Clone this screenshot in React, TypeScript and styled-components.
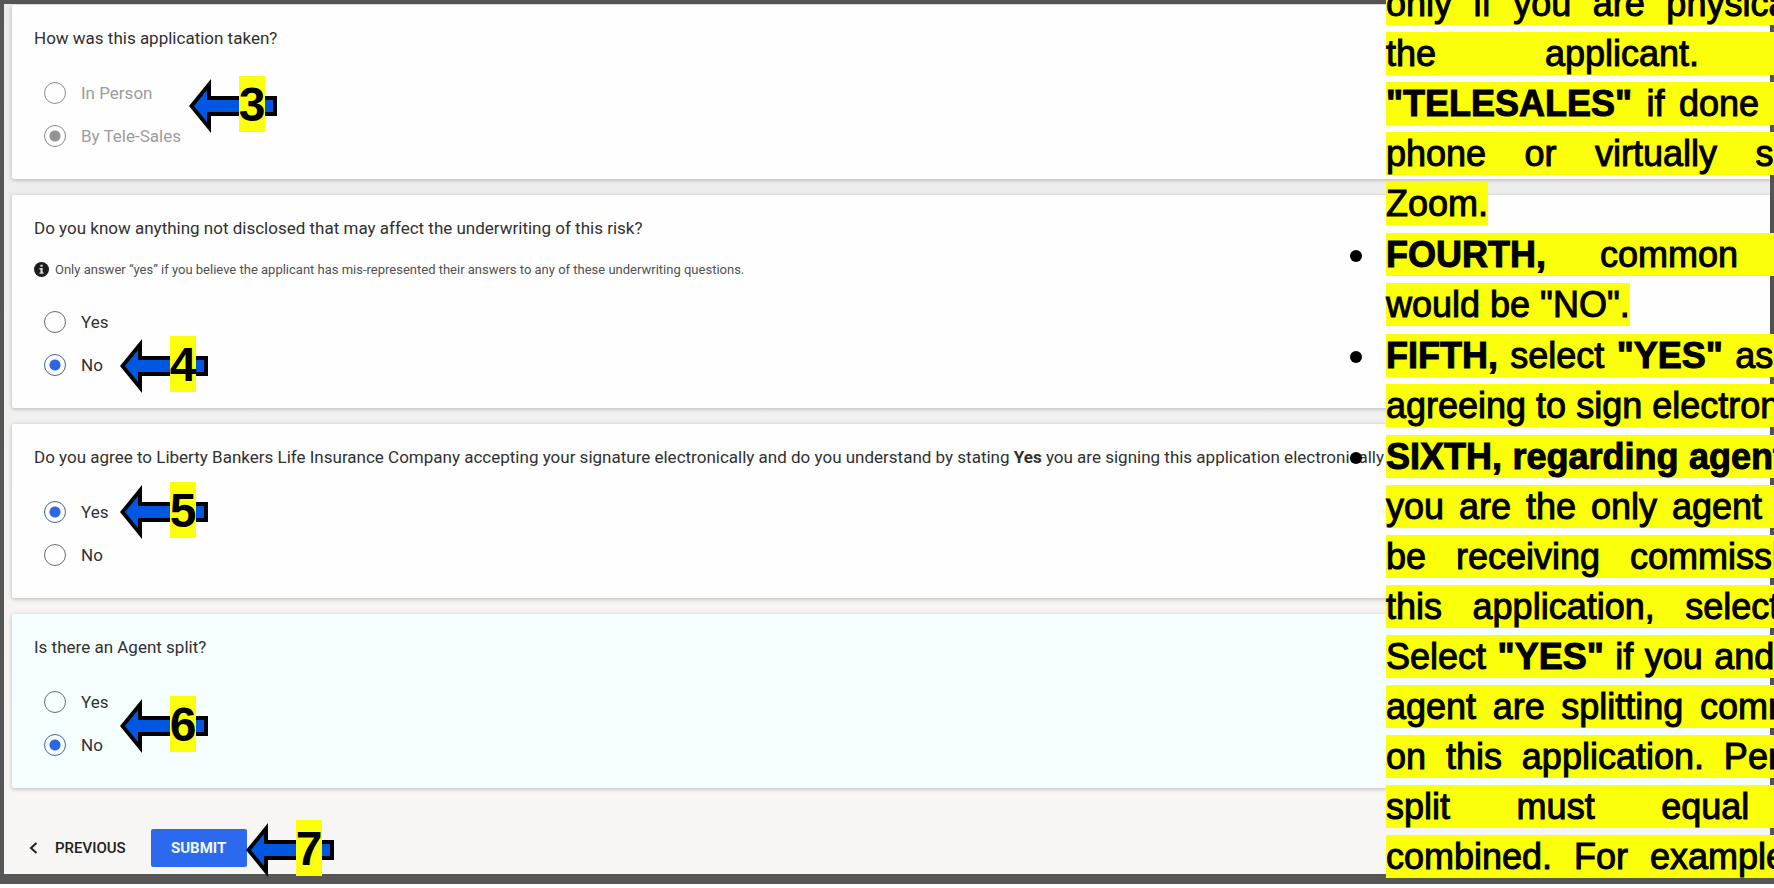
import React, { useState } from "react";
import styled, { createGlobalStyle } from "styled-components";

const GlobalStyle = createGlobalStyle`
  *, *::before, *::after { box-sizing: border-box; }
  body { margin: 0; background: #ffffff; overflow-x: hidden; }
`;

const Page = styled.div`
  position: relative;
  overflow: hidden;
  font-family: Roboto, "Liberation Sans", sans-serif;
`;

const Frame = styled.main`
  border: solid #565656;
  border-width: 4px 4px 10px;
  padding: 1px 0 7px 8px;
  background: linear-gradient(#ebebeb, #f1f1f0 50%, #f8f6f5 80%, #f8f6f5);
  margin-bottom: 4px;
`;

const Form = styled.form`
  display: flex;
  flex-direction: column;
  gap: 16px;
`;

const Card = styled.section<{ $tinted?: boolean }>`
  position: relative;
  padding: 0 22px 32px;
  border-radius: 2px 0 0 2px;
  background: ${(p) => (p.$tinted ? "#f5ffff" : "#fefefe")};
  box-shadow: 0 1px 4px rgba(0, 0, 0, 0.25);
`;

const Fields = styled.fieldset`
  min-width: 0;
  margin: 0;
  border: 0;
  padding: 0;
`;

const Question = styled.legend`
  padding: 21px 0 0;
  font-size: 17px;
  line-height: 24px;
  white-space: nowrap;
  color: #303030;
`;

const Note = styled.p`
  display: flex;
  align-items: center;
  gap: 6px;
  height: 19px;
  margin: 20px 0 0;
  font-size: 13px;
  white-space: nowrap;
  color: #505050;
`;

const Options = styled.div`
  display: flex;
  flex-direction: column;
  align-items: flex-start;
  gap: 21px;
  margin-top: 32px;
  padding-left: 10px;
`;

const Option = styled.label<{ $disabled?: boolean }>`
  display: flex;
  align-items: center;
  gap: 15px;
  font-size: 17px;
  line-height: 22px;
  color: ${(p) => (p.$disabled ? "#9c9c9c" : "#303030")};
`;

const Radio = styled.input`
  appearance: none;
  width: 22px;
  height: 22px;
  margin: 0;
  border: 1px solid #6c6c6c;
  border-radius: 50%;
  background: transparent;

  &:checked {
    border-color: #4a6590;
    background: radial-gradient(circle, #2c66e0 5px, transparent 6px);
  }
  &:disabled {
    border-color: #8c8c8c;
  }
  &:disabled:checked {
    background: radial-gradient(circle, #939393 5px, transparent 6px);
  }
`;

const Footer = styled.footer`
  display: flex;
  align-items: center;
  gap: 25px;
  position: relative;
  margin-top: 25px;
  padding-left: 17px;
`;

const PreviousButton = styled.button`
  display: flex;
  align-items: center;
  gap: 17px;
  height: 38px;
  padding: 0;
  border: 0;
  background: none;
  font: 500 15px Roboto, sans-serif;
  color: #202020;
`;

const SubmitButton = styled.button`
  width: 96px;
  height: 38px;
  padding: 0;
  border: 0;
  border-radius: 2px;
  background: #2b6aee;
  font: 700 15px Roboto, sans-serif;
  color: #f4f8ff;
`;

const Marker = styled.div<{ $left: number; $top: number }>`
  position: absolute;
  left: ${(p) => p.$left}px;
  top: ${(p) => p.$top}px;
  display: flex;
  padding: 0 12px 0 50px;

  svg {
    position: absolute;
    left: 0;
    top: 3px;
  }
`;

const MarkerNumber = styled.span`
  position: relative;
  width: 26px;
  height: 56px;
  display: flex;
  justify-content: center;
  background: #fbff0a;
  font: 700 48px/58px "Liberation Sans", sans-serif;
  color: #000000;
`;

const Instructions = styled.ul`
  position: absolute;
  left: 1386px;
  top: -21px;
  width: 522px;
  margin: 0;
  padding: 0;
  list-style: none;
  font-family: "Liberation Sans", sans-serif;
  font-size: 36px;
  line-height: 50px;
  color: #000000;
  -webkit-text-stroke: 1px #000000;
`;

const Instruction = styled.li<{ $bullet?: boolean }>`
  position: relative;
  margin-bottom: 1px;

  &::before {
    content: "";
    display: ${(p) => (p.$bullet ? "block" : "none")};
    position: absolute;
    left: -36px;
    top: 20px;
    width: 12px;
    height: 12px;
    border-radius: 50%;
    background: #000000;
  }
`;

const Line = styled.span<{ $last?: boolean }>`
  display: block;
  white-space: nowrap;
  text-align-last: ${(p) => (p.$last ? "left" : "justify")};
`;

const Highlight = styled.mark`
  padding: 1px 0;
  background: #fbff0a;
  color: inherit;
`;

function Arrow({ left, top, label }: { left: number; top: number; label: string }) {
  return (
    <Marker $left={left} $top={top}>
      <svg width="88" height="54" viewBox="0 0 88 54" aria-hidden="true">
        <path d="M0 27L22 0V17H88V37H22V54Z" fill="#000" />
        <path d="M5 27L18 11V21H84V33H18V43Z" fill="#0057e2" />
      </svg>
      <MarkerNumber>{label}</MarkerNumber>
    </Marker>
  );
}

interface GroupProps {
  name: string;
  options: string[];
  initial: string;
  disabled?: boolean;
}

function RadioOptions({ name, options, initial, disabled }: GroupProps) {
  const [value, setValue] = useState(initial);
  return (
    <Options>
      {options.map((option) => (
        <Option key={option} $disabled={disabled}>
          <Radio
            type="radio"
            name={name}
            value={option}
            checked={value === option}
            disabled={disabled}
            onChange={() => setValue(option)}
          />
          {option}
        </Option>
      ))}
    </Options>
  );
}

function InfoIcon() {
  return (
    <svg width="15" height="15" viewBox="0 0 15 15" aria-hidden="true">
      <circle cx="7.5" cy="7.5" r="7.5" fill="#1c1c1c" />
      <path d="M6.4 2.8h2.3v2H6.4zM5.4 6h3.3v4.4h1v1.4H5.4v-1.4h1V7.4h-1z" fill="#d8d8d8" />
    </svg>
  );
}

const instructions: { bullet?: boolean; lines: React.ReactNode[] }[] = [
  {
    lines: [
      "only if you are physically with",
      "the applicant. Select",
      <><b>"TELESALES"</b> if done over the</>,
      "phone or virtually such as",
      "Zoom.",
    ],
  },
  { bullet: true, lines: [<><b>FOURTH,</b> common answer</>, 'would be "NO".'] },
  {
    bullet: true,
    lines: [<><b>FIFTH,</b> select <b>"YES"</b> as you are</>, "agreeing to sign electronically."],
  },
  {
    bullet: true,
    lines: [
      <><b>SIXTH, regarding agent split,</b> if</>,
      "you are the only agent who will",
      "be receiving commissions on",
      <>this application, select <b>"NO".</b></>,
      <>Select <b>"YES"</b> if you and another</>,
      "agent are splitting commissions",
      "on this application. Percentage",
      "split must equal 100%",
      "combined. For example, 50/50",
    ],
  },
];

export default function App() {
  return (
    <Page>
      <GlobalStyle />
      <Frame>
        <Form onSubmit={(e) => e.preventDefault()}>
          <Card>
            <Fields>
              <Question>How was this application taken?</Question>
              <RadioOptions name="taken" options={["In Person", "By Tele-Sales"]} initial="By Tele-Sales" disabled />
            </Fields>
            <Arrow left={177} top={71} label="3" />
          </Card>
          <Card>
            <Fields>
              <Question>Do you know anything not disclosed that may affect the underwriting of this risk?</Question>
              <Note>
                <InfoIcon />
                Only answer “yes” if you believe the applicant has mis-represented their answers to any of these
                underwriting questions.
              </Note>
              <RadioOptions name="disclosed" options={["Yes", "No"]} initial="No" />
            </Fields>
            <Arrow left={108} top={141} label="4" />
          </Card>
          <Card>
            <Fields>
              <Question>
                Do you agree to Liberty Bankers Life Insurance Company accepting your signature electronically and do
                you understand by stating <b>Yes</b> you are signing this application electronically
              </Question>
              <RadioOptions name="signature" options={["Yes", "No"]} initial="Yes" />
            </Fields>
            <Arrow left={108} top={58} label="5" />
          </Card>
          <Card $tinted>
            <Fields>
              <Question>Is there an Agent split?</Question>
              <RadioOptions name="split" options={["Yes", "No"]} initial="No" />
            </Fields>
            <Arrow left={108} top={82} label="6" />
          </Card>
          <Footer>
            <PreviousButton type="button">
              <svg width="9" height="12" viewBox="0 0 9 12" aria-hidden="true">
                <path d="M7.5 1L2 6L7.5 11" fill="none" stroke="#202020" strokeWidth="2" />
              </svg>
              PREVIOUS
            </PreviousButton>
            <SubmitButton type="submit">SUBMIT</SubmitButton>
            <Arrow left={234} top={-9} label="7" />
          </Footer>
        </Form>
      </Frame>
      <Instructions>
        {instructions.map((item, i) => (
          <Instruction key={i} $bullet={item.bullet}>
            {item.lines.map((line, j) => (
              <Line key={j} $last={j === item.lines.length - 1 && i < instructions.length - 1}>
                <Highlight>{line}</Highlight>
              </Line>
            ))}
          </Instruction>
        ))}
      </Instructions>
    </Page>
  );
}
